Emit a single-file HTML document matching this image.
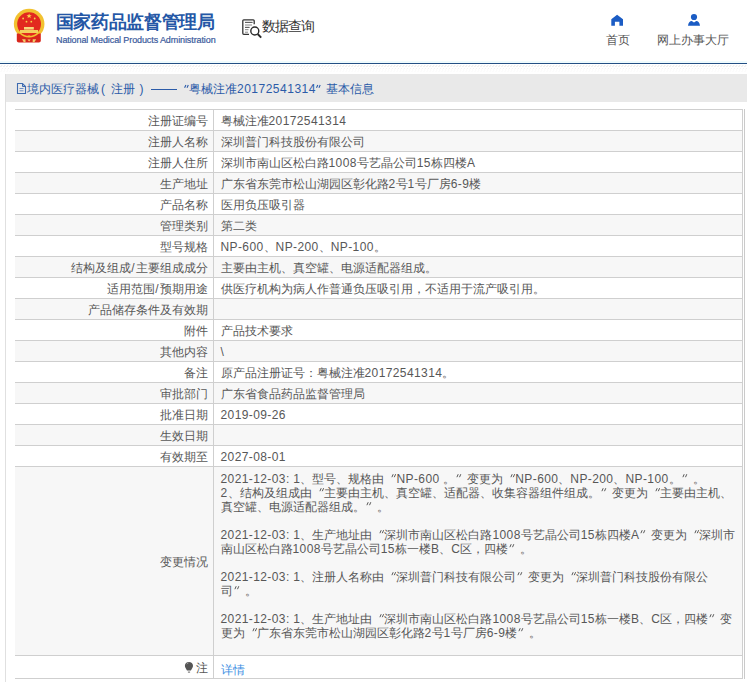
<!DOCTYPE html>
<html><head><meta charset="utf-8">
<style>
*{margin:0;padding:0;box-sizing:border-box}
html,body{width:747px;height:682px;overflow:hidden;background:#fff}
body{position:relative;font-family:"Liberation Sans",sans-serif;font-size:12px;color:#333}
.abs{position:absolute;white-space:nowrap}
#title{left:55.5px;top:11px;font-size:18px;letter-spacing:-0.3px;font-weight:bold;color:#2457a6;line-height:22px}
#entitle{left:56px;top:35px;font-size:9px;color:#3a5a9c;letter-spacing:-0.1px;-webkit-text-stroke:0.2px #3a5a9c;line-height:11px}
#sq{left:262px;top:16px;font-size:14px;letter-spacing:-1px;color:#333;line-height:20px}
.navt{top:32.5px;font-size:12.3px;color:#555;line-height:15px}
#cyan{left:0;top:61px;width:747px;height:2px;background:#effbfd}
#bline{left:0;top:63px;width:747px;height:1px;background:#234f84}
#box{left:5px;top:74px;width:760px;height:620px;border-left:1px solid #e0e0e0}
#hbar{left:6px;top:74px;width:741px;height:28px;background:#e9e9e9}
.ht{top:81px;font-size:12px;color:#2b5ba8;line-height:16px}
.n{letter-spacing:0.4px}
.sl{padding:0 0.8px}
.q{vertical-align:top;stroke:currentColor;stroke-width:1;fill:none}
table{position:absolute;left:15px;top:109px;width:728px;border-collapse:collapse}
td{border:1px solid #cfcfcf;font-size:12px;line-height:14px;padding:4px 0 2px 0;height:21px;white-space:nowrap;color:#575757;vertical-align:middle}
td.l{width:198px;text-align:right;padding-right:5px;border-left:none}
td.v{padding-left:7px}
td.ch{padding-top:5px;padding-bottom:1px}
tr.g td{background:#f7f7f7}
tr.last td{height:23px}
.lk{color:#3d8fe3;position:relative;top:1.5px}
</style></head><body>

<svg class="abs" style="left:0;top:0" width="747" height="60" viewBox="0 0 747 60">
  <!-- emblem -->
  <defs><mask id="rb"><rect x="0" y="0" width="60" height="60" fill="#fff"/><circle cx="29.1" cy="24" r="13.6" fill="#000"/></mask></defs>
  <circle cx="29.15" cy="24" r="15.3" fill="#f2c230"/>
  <path d="M16.8 33.6 H40.8 V40.8 Q40.8 42.6 38.8 42.6 H18.8 Q16.8 42.6 16.8 40.8 Z" fill="#d8261c" mask="url(#rb)"/>
  <circle cx="29.1" cy="24.1" r="11.9" fill="#e2291f"/>
  <polygon points="29.1,13.4 29.8,15.2 31.7,15.2 30.2,16.4 30.7,18.2 29.1,17.1 27.5,18.2 28,16.4 26.5,15.2 28.4,15.2" fill="#f8d84c"/>
  <circle cx="23.1" cy="18.5" r="0.9" fill="#f6d24a"/>
  <circle cx="34.7" cy="18.5" r="0.9" fill="#f6d24a"/>
  <circle cx="26.5" cy="21.7" r="0.9" fill="#f6d24a"/>
  <circle cx="31.3" cy="21.7" r="0.9" fill="#f6d24a"/>
  <rect x="24" y="27" width="9.8" height="2.6" fill="#f7d77a"/>
  <rect x="20" y="30" width="18" height="3" fill="#f4cf5e"/>
  <path d="M26.5 37 Q29 33.6 31.7 37 Z" fill="#f2c230"/>
  <path d="M22 39.2 H25.5 V42.2 H23.8 Z M32.7 39.2 H36.2 L34.4 42.2 H32.7 Z M27.5 39.5 H30.7 L29.1 41.5 Z" fill="#f2cc6a"/>
  <!-- search icon -->
  <path d="M254.2 24.3 V20.8 Q254.2 19.8 253.2 19.8 H243.8 Q242.8 19.8 242.8 20.8 V33.3 Q242.8 34.3 243.8 34.3 H249" fill="none" stroke="#333" stroke-width="1.3"/>
  <path d="M245 22.4h7.5M245 25h7M245 27.4h4.5M245 29.7h3.5M245 32.2h3" stroke="#888" stroke-width="1"/>
  <path d="M245 22.4h7.5M245 27.4h4.5" stroke="#555" stroke-width="0.9"/>
  <circle cx="254.8" cy="31" r="4" fill="#fff" stroke="#2a2a2a" stroke-width="1.4"/>
  <path d="M257.7 34 L261.2 37.6" stroke="#2a2a2a" stroke-width="1.9"/>
  <!-- home -->
  <path d="M617.1 14.8 L623 19.2 V25.8 H619.4 V21.7 H614.9 V25.8 H611.3 V19.2 Z" fill="#1b5cc4"/>
  <!-- person -->
  <circle cx="694" cy="17" r="3.1" fill="#1b5cc4"/>
  <path d="M688 25.8 C688.3 22.6 689.8 21 691.8 20.9 L694 22.6 L696.2 20.9 C698.2 21 699.7 22.6 700 25.8 Z" fill="#1b5cc4"/>
</svg>
<div class="abs" id="title">国家药品监督管理局</div>
<div class="abs" id="entitle">National Medical Products Administration</div>
<div class="abs" id="sq">数据查询</div>
<div class="abs navt" style="left:606px">首页</div>
<div class="abs navt" style="left:657px">网上办事大厅</div>

<div class="abs" id="cyan"></div>
<div class="abs" id="bline"></div>
<svg class="abs" style="left:0;top:64px" width="747" height="9"><defs><pattern id="pp" x="0" y="0" width="3" height="9" patternUnits="userSpaceOnUse"><path d="M0.6 2.9 L2 1.3" stroke="#dcdcdc" stroke-width="0.9"/><path d="M1.6 5.4 L3 3.8" stroke="#efefef" stroke-width="0.9"/><path d="M0.6 7.9 L2 6.3" stroke="#f7f7f7" stroke-width="0.9"/></pattern></defs><rect width="747" height="9" fill="url(#pp)"/></svg>

<div class="abs" id="box"></div>
<div class="abs" id="hbar"></div>
<svg class="abs" style="left:16px;top:82px" width="11" height="13" viewBox="0 0 11 13">
  <path d="M1.5 1.5 H6.5 L9.5 4.5 V11.5 H1.5 Z" fill="none" stroke="#3e6bb0" stroke-width="1.1"/>
  <path d="M6.5 1.5 V4.5 H9.5" fill="none" stroke="#3e6bb0" stroke-width="1"/>
  <path d="M3.5 6.5h4M3.5 8.8h4" stroke="#6f8fc4" stroke-width="1"/>
</svg>
<div class="abs ht" style="left:27px">境内医疗器械</div>
<div class="abs ht" style="left:101px">(</div>
<div class="abs ht" style="left:111px">注册</div>
<div class="abs ht" style="left:139.5px">)</div>
<div class="abs" style="left:150.5px;top:89px;width:26px;height:1px;background:#2b5ba8"></div>
<svg class="abs" style="left:177px;top:83px" width="12" height="14" viewBox="0 0 12 14"><path d="M7.6 4.8 L8.9 2.0 M10.0 4.8 L11.3 2.0" stroke="#2b5ba8" stroke-width="1.1" fill="none"/></svg>
<div class="abs ht" style="left:189px">粤械注准<span class="n" style="letter-spacing:0.5px">20172541314</span></div>
<svg class="abs" style="left:314.5px;top:83px" width="12" height="14" viewBox="0 0 12 14"><path d="M1.5 4.8 L2.8 2.0 M3.9 4.8 L5.2 2.0" stroke="#2b5ba8" stroke-width="1.1" fill="none"/></svg>
<div class="abs ht" style="left:325.5px">基本信息</div>

<div class="abs" style="left:744px;top:109px;width:1px;height:570px;background:#cacaca"></div>
<table>
<tr><td class="l">注册证编号</td><td class="v">粤械注准<span class="n">20172541314</span></td></tr>
<tr class="g"><td class="l">注册人名称</td><td class="v">深圳普门科技股份有限公司</td></tr>
<tr><td class="l">注册人住所</td><td class="v">深圳市南山区松白路<span class="n">1008</span>号艺晶公司<span class="n">15</span>栋四楼<span class="n">A</span></td></tr>
<tr class="g"><td class="l">生产地址</td><td class="v">广东省东莞市松山湖园区彰化路<span class="n">2</span>号<span class="n">1</span>号厂房<span class="n">6-9</span>楼</td></tr>
<tr><td class="l">产品名称</td><td class="v">医用负压吸引器</td></tr>
<tr class="g"><td class="l">管理类别</td><td class="v">第二类</td></tr>
<tr><td class="l">型号规格</td><td class="v"><span class="n">NP-600</span>、<span class="n">NP-200</span>、<span class="n">NP-100</span>。</td></tr>
<tr class="g"><td class="l">结构及组成<span class="sl">/</span>主要组成成分</td><td class="v">主要由主机、真空罐、电源适配器组成。</td></tr>
<tr><td class="l">适用范围<span class="sl">/</span>预期用途</td><td class="v">供医疗机构为病人作普通负压吸引用，不适用于流产吸引用。</td></tr>
<tr class="g"><td class="l">产品储存条件及有效期</td><td class="v"></td></tr>
<tr><td class="l">附件</td><td class="v">产品技术要求</td></tr>
<tr class="g"><td class="l">其他内容</td><td class="v"><span class="n">\</span></td></tr>
<tr><td class="l">备注</td><td class="v">原产品注册证号：粤械注准<span class="n">20172541314</span>。</td></tr>
<tr class="g"><td class="l">审批部门</td><td class="v">广东省食品药品监督管理局</td></tr>
<tr><td class="l">批准日期</td><td class="v"><span class="n">2019-09-26</span></td></tr>
<tr class="g"><td class="l">生效日期</td><td class="v"></td></tr>
<tr><td class="l">有效期至</td><td class="v"><span class="n">2027-08-01</span></td></tr>
<tr class="g"><td class="l">变更情况</td><td class="v ch"><span class="n">2021-12-03: 1</span>、型号、规格由<svg class="q" width="12" height="14" viewBox="0 0 12 14"><path d="M7.9 5.2 L9.2 2.2 M10.3 5.2 L11.6 2.2"/></svg><span class="n">NP-600 </span>。<svg class="q" width="12" height="14" viewBox="0 0 12 14"><path d="M1.9 5.2 L3.2 2.2 M4.5 5.2 L5.8 2.2"/></svg>变更为<svg class="q" width="12" height="14" viewBox="0 0 12 14"><path d="M7.9 5.2 L9.2 2.2 M10.3 5.2 L11.6 2.2"/></svg><span class="n">NP-600</span>、<span class="n">NP-200</span>、<span class="n">NP-100</span>。<svg class="q" width="12" height="14" viewBox="0 0 12 14"><path d="M1.9 5.2 L3.2 2.2 M4.5 5.2 L5.8 2.2"/></svg>。<br><span class="n">2</span>、结构及组成由<svg class="q" width="12" height="14" viewBox="0 0 12 14"><path d="M7.9 5.2 L9.2 2.2 M10.3 5.2 L11.6 2.2"/></svg>主要由主机、真空罐、适配器、收集容器组件组成。<svg class="q" width="12" height="14" viewBox="0 0 12 14"><path d="M1.9 5.2 L3.2 2.2 M4.5 5.2 L5.8 2.2"/></svg>变更为<svg class="q" width="12" height="14" viewBox="0 0 12 14"><path d="M7.9 5.2 L9.2 2.2 M10.3 5.2 L11.6 2.2"/></svg>主要由主机、<br>真空罐、电源适配器组成。<svg class="q" width="12" height="14" viewBox="0 0 12 14"><path d="M1.9 5.2 L3.2 2.2 M4.5 5.2 L5.8 2.2"/></svg>。<br><br><span class="n">2021-12-03: 1</span>、生产地址由<svg class="q" width="12" height="14" viewBox="0 0 12 14"><path d="M7.9 5.2 L9.2 2.2 M10.3 5.2 L11.6 2.2"/></svg>深圳市南山区松白路<span class="n">1008</span>号艺晶公司<span class="n">15</span>栋四楼<span class="n">A</span><svg class="q" width="12" height="14" viewBox="0 0 12 14"><path d="M1.9 5.2 L3.2 2.2 M4.5 5.2 L5.8 2.2"/></svg>变更为<svg class="q" width="12" height="14" viewBox="0 0 12 14"><path d="M7.9 5.2 L9.2 2.2 M10.3 5.2 L11.6 2.2"/></svg>深圳市<br>南山区松白路<span class="n">1008</span>号艺晶公司<span class="n">15</span>栋一楼<span class="n">B</span>、<span class="n">C</span>区，四楼<svg class="q" width="12" height="14" viewBox="0 0 12 14"><path d="M1.9 5.2 L3.2 2.2 M4.5 5.2 L5.8 2.2"/></svg>。<br><br><span class="n">2021-12-03: 1</span>、注册人名称由<svg class="q" width="12" height="14" viewBox="0 0 12 14"><path d="M7.9 5.2 L9.2 2.2 M10.3 5.2 L11.6 2.2"/></svg>深圳普门科技有限公司<svg class="q" width="12" height="14" viewBox="0 0 12 14"><path d="M1.9 5.2 L3.2 2.2 M4.5 5.2 L5.8 2.2"/></svg>变更为<svg class="q" width="12" height="14" viewBox="0 0 12 14"><path d="M7.9 5.2 L9.2 2.2 M10.3 5.2 L11.6 2.2"/></svg>深圳普门科技股份有限公<br>司<svg class="q" width="12" height="14" viewBox="0 0 12 14"><path d="M1.9 5.2 L3.2 2.2 M4.5 5.2 L5.8 2.2"/></svg>。<br><br><span class="n">2021-12-03: 1</span>、生产地址由<svg class="q" width="12" height="14" viewBox="0 0 12 14"><path d="M7.9 5.2 L9.2 2.2 M10.3 5.2 L11.6 2.2"/></svg>深圳市南山区松白路<span class="n">1008</span>号艺晶公司<span class="n">15</span>栋一楼<span class="n">B</span>、<span class="n">C</span>区，四楼<svg class="q" width="12" height="14" viewBox="0 0 12 14"><path d="M1.9 5.2 L3.2 2.2 M4.5 5.2 L5.8 2.2"/></svg>变<br>更为<svg class="q" width="12" height="14" viewBox="0 0 12 14"><path d="M7.9 5.2 L9.2 2.2 M10.3 5.2 L11.6 2.2"/></svg>广东省东莞市松山湖园区彰化路<span class="n">2</span>号<span class="n">1</span>号厂房<span class="n">6-9</span>楼<svg class="q" width="12" height="14" viewBox="0 0 12 14"><path d="M1.9 5.2 L3.2 2.2 M4.5 5.2 L5.8 2.2"/></svg>。<br>&nbsp;</td></tr>
<tr class="last"><td class="l">注</td><td class="v"><span class="lk">详情</span></td></tr>
</table>
<svg class="abs" style="left:0;top:640px" width="220" height="42" viewBox="0 640 220 42">
  <path d="M188.9 661.9 C191.3 661.9 193 663.6 193 665.8 C193 667.6 191.8 668.6 190.9 670.6 H187 C186.1 668.6 184.9 667.6 184.9 665.8 C184.9 663.6 186.6 661.9 188.9 661.9 Z" fill="#555"/>
  <path d="M186.8 664.2 Q187.4 663.2 188.4 663" stroke="#bbb" stroke-width="0.8" fill="none"/>
  <rect x="187.9" y="671.6" width="2.2" height="1" fill="#666"/>
</svg>
</body></html>
